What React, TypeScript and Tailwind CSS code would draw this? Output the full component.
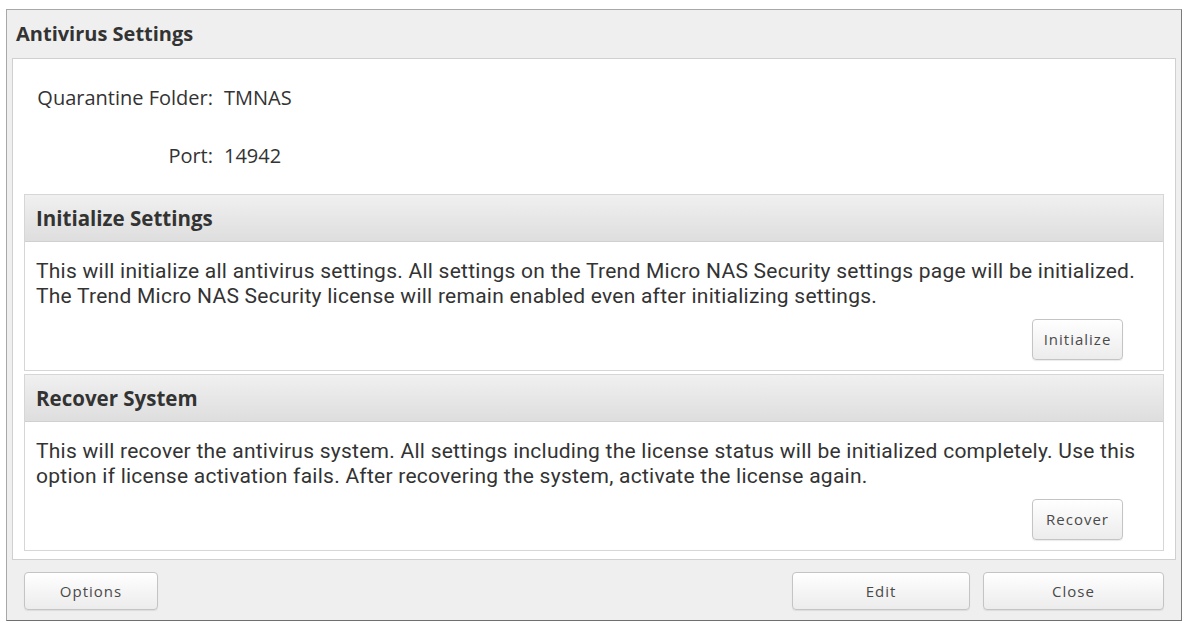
const font = { fontFamily: '"Open Sans", "Liberation Sans", sans-serif' };

const Btn = ({ label, className }: { label: string; className: string }) => (
  <button
    className={`rounded-[4px] border border-[#c4c4c4] bg-gradient-to-b from-[#ffffff] to-[#ececec] text-[15px] tracking-[1px] text-[#4a4a4a] shadow-[0_1px_1px_rgba(0,0,0,0.08)] ${className}`}
  >
    {label}
  </button>
);

const Section = ({ title, lines, action }: { title: string; lines: string[]; action: string }) => (
  <div className="border border-[#d6d6d6] bg-white">
    <div className="flex h-[47px] items-center bg-gradient-to-b from-[#f0f0f0] to-[#dedede] border-b border-[#d0d0d0] px-[11px] text-[20.5px] font-bold text-[#333]">
      {title}
    </div>
    <div className="px-[11px] pt-[17px] font-['Roboto',sans-serif] text-[21px] leading-[25px] tracking-[0.25px] text-[#333]">
      {lines.map((l) => (
        <div key={l} className="whitespace-nowrap">{l}</div>
      ))}
    </div>
    <div className="flex justify-end pr-[40px] pt-[10px] pb-[10px]">
      <Btn label={action} className="h-[41px] w-[91px]" />
    </div>
  </div>
);

export default function App() {
  return (
    <div className="h-[623px] w-[1185px] overflow-hidden bg-white pl-[6px] pt-[9px]" style={font}>
      <div className="flex h-[612px] w-[1176px] flex-col border border-[#a8a8a8] border-b-[#6f6f6f] border-r-[#7a7a7a] bg-[#efefef]">
        <div className="flex h-[48px] items-center pl-[9px] text-[20px] font-bold text-[#333]">Antivirus Settings</div>

        <div className="mx-[5px] flex flex-col border border-[#d0d0d0] bg-white px-[11px] pb-[8px]">
          <div className="flex flex-col gap-[33px] pt-[26px] pb-[26px] text-[20px] leading-[25px] text-[#333]">
            <div className="flex">
              <span className="w-[189px] text-right">Quarantine Folder:</span>
              <span className="pl-[11px]">TMNAS</span>
            </div>
            <div className="flex">
              <span className="w-[189px] text-right">Port:</span>
              <span className="pl-[11px]">14942</span>
            </div>
          </div>

          <div className="flex flex-col gap-[3px]">
            <Section
              title="Initialize Settings"
              lines={[
                "This will initialize all antivirus settings. All settings on the Trend Micro NAS Security settings page will be initialized.",
                "The Trend Micro NAS Security license will remain enabled even after initializing settings.",
              ]}
              action="Initialize"
            />
            <Section
              title="Recover System"
              lines={[
                "This will recover the antivirus system. All settings including the license status will be initialized completely. Use this",
                "option if license activation fails. After recovering the system, activate the license again.",
              ]}
              action="Recover"
            />
          </div>
        </div>

        <div className="flex items-center px-[17px] pt-[12px]">
          <Btn label="Options" className="h-[38px] w-[134px]" />
          <div className="flex-1" />
          <Btn label="Edit" className="h-[38px] w-[178px]" />
          <Btn label="Close" className="ml-[13px] h-[38px] w-[181px]" />
        </div>
      </div>
    </div>
  );
}
